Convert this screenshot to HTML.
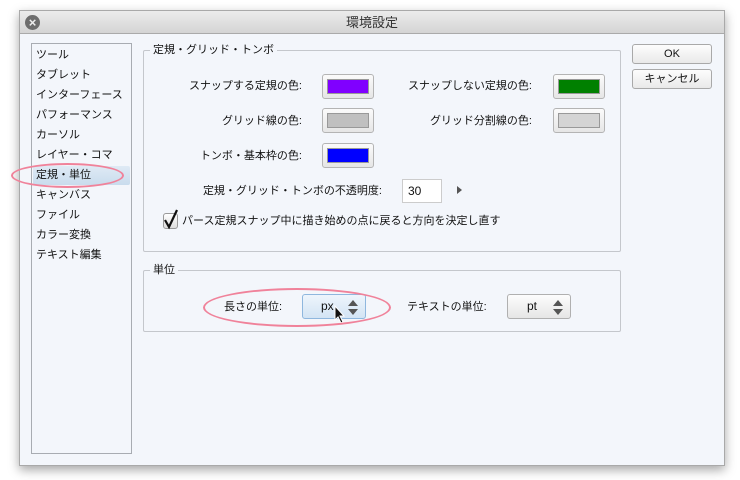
<!DOCTYPE html>
<html><head><meta charset="utf-8"><style>
*{box-sizing:border-box;margin:0;padding:0}
body{width:740px;height:480px;background:#fff;position:relative;overflow:hidden;font-family:"Liberation Sans","Noto Sans CJK JP",sans-serif;font-size:11px;color:#111}
.a{position:absolute}
.win{left:19px;top:10px;width:706px;height:456px;background:#f3f6fb;border:1px solid #a9a9a9;box-shadow:0 4px 10px rgba(0,0,0,.35)}
.title{left:0;top:0;width:704px;height:23px;background:linear-gradient(#ececec,#d4d4d4);border-bottom:1px solid #aaa;text-align:center;line-height:23px;font-size:13px;color:#333}
.close{left:5px;top:4px;width:15px;height:15px;border-radius:50%;background:#6d6d6d;color:#eee;font-size:13px;line-height:15px;text-align:center;font-weight:bold}
.list{left:31px;top:43px;width:101px;height:411px;border:1px solid #a8acb2;background:#f3f6fb}
.it{position:absolute;left:4px;font-size:11px;line-height:14px}
.grp{border:1px solid #c4c7cc;border-radius:2px}
.lg{background:#f3f6fb;padding:0 3px;font-size:11px;line-height:14px}
.lbl{text-align:right;font-size:11px;line-height:14px}
.sw{width:52px;height:25px;border:1px solid #b4b4b4;border-radius:3px;background:linear-gradient(#fbfbfb,#e6e6e6)}
.sw i{position:absolute;left:4px;top:4px;width:42px;height:15px;border:1px solid #999}
.btn{width:80px;height:20px;border:1px solid #a9a9a9;border-radius:3px;background:linear-gradient(#fdfdfd,#e9e9e9);text-align:center;line-height:18px;font-size:11px}
.sel{height:25px;border:1px solid #b0b0b0;border-radius:3px;background:linear-gradient(#fdfdfd,#e6e6e6);font-size:12px;line-height:23px}
</style></head><body>
<div class="a win">
 <div class="a title">環境設定</div>
 <div class="a close">×</div>
</div>
<div class="a list">
 <div class="a" style="left:1px;top:122px;width:97px;height:19px;background:linear-gradient(#dfeaf5,#c9dced);border-radius:2px"></div>
 <div class="it" style="top:4px">ツール</div>
 <div class="it" style="top:24px">タブレット</div>
 <div class="it" style="top:44px">インターフェース</div>
 <div class="it" style="top:64px">パフォーマンス</div>
 <div class="it" style="top:84px">カーソル</div>
 <div class="it" style="top:104px">レイヤー・コマ</div>
 <div class="it" style="top:124px">定規・単位</div>
 <div class="it" style="top:144px">キャンバス</div>
 <div class="it" style="top:164px">ファイル</div>
 <div class="it" style="top:184px">カラー変換</div>
 <div class="it" style="top:204px">テキスト編集</div>
</div>
<div class="a" style="left:11px;top:163px;width:113px;height:25px;border:2px solid #f0829a;border-radius:50%"></div>

<div class="a grp" style="left:143px;top:50px;width:478px;height:202px"></div>
<div class="a lg" style="left:150px;top:43px">定規・グリッド・トンボ</div>
<div class="a lbl" style="left:150px;width:152px;top:79px">スナップする定規の色:</div>
<div class="a sw" style="left:322px;top:74px"><i style="background:#8000ff"></i></div>
<div class="a lbl" style="left:150px;width:152px;top:114px">グリッド線の色:</div>
<div class="a sw" style="left:322px;top:108px"><i style="background:#c0c0c0"></i></div>
<div class="a lbl" style="left:150px;width:152px;top:149px">トンボ・基本枠の色:</div>
<div class="a sw" style="left:322px;top:143px"><i style="background:#0000ff"></i></div>
<div class="a lbl" style="left:380px;width:152px;top:79px">スナップしない定規の色:</div>
<div class="a sw" style="left:553px;top:74px"><i style="background:#008000"></i></div>
<div class="a lbl" style="left:380px;width:152px;top:114px">グリッド分割線の色:</div>
<div class="a sw" style="left:553px;top:108px"><i style="background:#d4d4d4"></i></div>
<div class="a lbl" style="left:180px;width:202px;top:184px">定規・グリッド・トンボの不透明度:</div>
<div class="a" style="left:402px;top:179px;width:40px;height:24px;background:#fff;border:1px solid #ccc;line-height:22px;padding-left:5px;font-size:12px">30</div>
<div class="a" style="left:457px;top:186px;width:0;height:0;border-left:5px solid #555;border-top:4px solid transparent;border-bottom:4px solid transparent"></div>
<div class="a" style="left:163px;top:213px;width:15px;height:16px;border:1px solid #999;border-radius:3px;background:linear-gradient(#fff,#ddd)"></div>
<svg class="a" style="left:162px;top:208px" width="20" height="22"><path d="M3 12l4 7 8-17" fill="none" stroke="#111" stroke-width="2.2"/></svg>
<div class="a" style="left:182px;top:214px;line-height:14px">パース定規スナップ中に描き始めの点に戻ると方向を決定し直す</div>

<div class="a grp" style="left:143px;top:270px;width:478px;height:62px"></div>
<div class="a lg" style="left:150px;top:263px">単位</div>
<div class="a" style="left:224px;top:300px;line-height:14px">長さの単位:</div>
<div class="a sel" style="left:302px;top:294px;width:64px;border-color:#8fb7de;background:linear-gradient(#eef5fc,#d3e4f4)"><span style="position:absolute;left:18px">px</span></div>
<div class="a" style="left:407px;top:300px;line-height:14px">テキストの単位:</div>
<div class="a sel" style="left:507px;top:294px;width:64px"><span style="position:absolute;left:19px">pt</span></div>
<svg class="a" style="left:0;top:0" width="740" height="480">
 <g fill="#555"><path d="M353 300l-5 6h10z"/><path d="M348 309h10l-5 6z"/><path d="M558 300l-5 6h10z"/><path d="M553 309h10l-5 6z"/></g>
 <path d="M335 306v14l3-3 3 6 2-1-3-6h4z" fill="#111" stroke="#fff" stroke-width="1"/>
</svg>
<div class="a" style="left:203px;top:288px;width:188px;height:39px;border:2px solid #f0829a;border-radius:50%"></div>

<div class="a btn" style="left:632px;top:44px">OK</div>
<div class="a btn" style="left:632px;top:69px">キャンセル</div>
</body></html>
